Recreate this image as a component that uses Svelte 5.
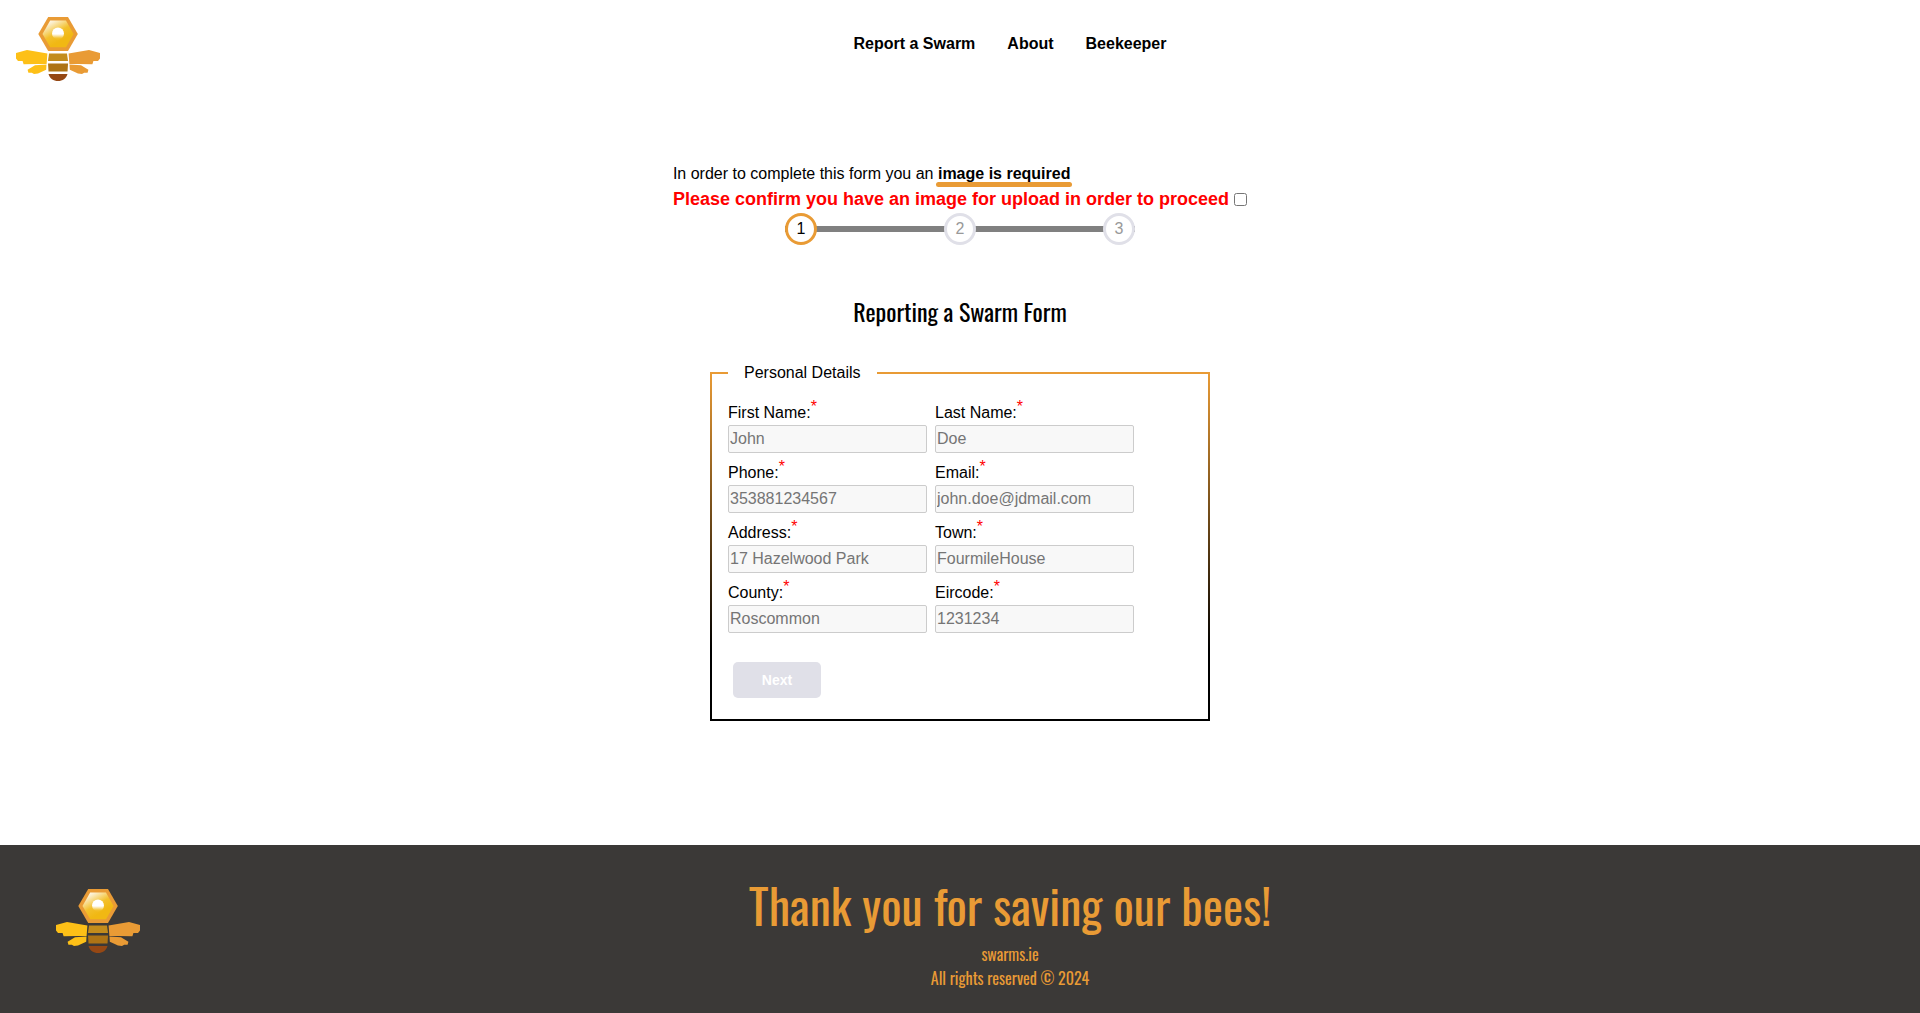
<script>
  const links = ['Report a Swarm', 'About', 'Beekeeper'];
  const fields = [
    { id: 'first-name', label: 'First Name:', hint: 'John', type: 'text' },
    { id: 'last-name', label: 'Last Name:', hint: 'Doe', type: 'text' },
    { id: 'phone', label: 'Phone:', hint: '353881234567', type: 'tel' },
    { id: 'email', label: 'Email:', hint: 'john.doe@jdmail.com', type: 'email' },
    { id: 'address', label: 'Address:', hint: '17 Hazelwood Park', type: 'text' },
    { id: 'town', label: 'Town:', hint: 'FourmileHouse', type: 'text' },
    { id: 'county', label: 'County:', hint: 'Roscommon', type: 'text' },
    { id: 'eircode', label: 'Eircode:', hint: '1231234', type: 'text' }
  ];
  let confirmed = $state(false);
</script>

{#snippet bee()}
  <svg class="bee" viewBox="0 0 84 65" role="img" aria-label="Swarms bee logo">
    <defs>
      <linearGradient id="comb" x1="0.1" y1="0" x2="0.6" y2="0.75">
        <stop offset="0" stop-color="#fff" />
        <stop offset="0.2" stop-color="#fbeecb" />
        <stop offset="0.65" stop-color="#f3c02c" />
        <stop offset="1" stop-color="#f1b813" />
      </linearGradient>
      <linearGradient id="dot" x1="0" y1="0" x2="0" y2="1">
        <stop offset="0.55" stop-color="#fff" />
        <stop offset="0.9" stop-color="#f3c02c" />
      </linearGradient>
    </defs>
    <path d="M32.200 1h19.800l9.800 17-9.800 17H32.200L22.300 18z" fill="#e99b35" />
    <path d="M34.200 4.600h15.800L57.600 18l-7.600 13.200H34.200L26.500 18z" fill="url(#comb)" />
    <circle cx="42" cy="17.400" r="6" fill="url(#dot)" />
    <path d="M0 37l11-3 20.400 3.600-.8 10.400L21 48l-13.400.2L6.600 45H2L0 42.500z" fill="#fdc017" />
    <path d="M84 37l-11-3-20.400 3.600.8 10.400L63 48l13.400.2 1-3.200H82l2-2.500z" fill="#e99b35" />
    <path d="M30.500 48.400l-11.500.8-7.400 4.600.8 3h3.400l2.200 1.200 4-.6 8.200-3.600z" fill="#fdc017" />
    <path d="M53.500 48.400l11.500.8 7.400 4.600-.8 3h-3.400L66 58l-4-.6-8.200-3.600z" fill="#e99b35" />
    <path d="M33 37.500h18l1 7.500H32z" fill="#c38c1c" />
    <path d="M32 47.500h20l-.5 8h-19z" fill="#ae7415" />
    <path d="M32.500 58h19c-1.200 4.600-5 7-9.500 7s-8.300-2.400-9.500-7z" fill="#954814" />
  </svg>
{/snippet}

<div class="page">
  <header>
    {@render bee()}
    <nav>
      {#each links as link}
        <a href="#top">{link}</a>
      {/each}
    </nav>
  </header>

  <main>
    <section class="notice">
      <p>In order to complete this form you an <strong>image is required</strong></p>
      <label class="confirm">
        Please confirm you have an image for upload in order to proceed
        <input type="checkbox" bind:checked={confirmed} />
      </label>
    </section>

    <ol class="steps">
      <li class="active">1</li>
      <li>2</li>
      <li>3</li>
    </ol>

    <h1>Reporting a Swarm Form</h1>

    <form>
      <fieldset>
        <legend>Personal Details</legend>
        <div class="grid">
          {#each fields as f}
            <div class="field">
              <label for={f.id}>{f.label}<span class="star">*</span></label>
              <input id={f.id} type={f.type} placeholder={f.hint} required />
            </div>
          {/each}
        </div>
        <button type="button" disabled={!confirmed}>Next</button>
      </fieldset>
    </form>
  </main>

  <footer>
    {@render bee()}
    <div class="thanks">
      <h2>Thank you for saving our bees!</h2>
      <p>swarms.ie</p>
      <p>All rights reserved © 2024</p>
    </div>
  </footer>
</div>

<style>
  :global(body) {
    margin: 0;
    background: #fff;
    color: #000;
    font: 16px/24px 'Liberation Sans', Arial, sans-serif;
  }
  .page {
    min-height: 100vh;
    display: flex;
    flex-direction: column;
  }
  p, h1, h2, ol {
    margin: 0;
    padding: 0;
    font-weight: 400;
  }
  h1, .thanks {
    font-family: Oswald, 'Liberation Sans Narrow', sans-serif;
  }
  .bee {
    width: 84px;
    height: 65px;
    flex: none;
  }
  header {
    display: flex;
    padding: 16px 0 0 16px;
  }
  nav {
    flex: 1;
    display: flex;
    justify-content: center;
    gap: 32px;
    padding-top: 16px;
  }
  nav a {
    color: #000;
    font-weight: 700;
    text-decoration: none;
  }
  main {
    flex: 1;
    display: flex;
    flex-direction: column;
    align-items: center;
    padding: 81px 0 124px;
  }
  strong {
    display: inline-block;
    position: relative;
  }
  strong::after {
    content: '';
    position: absolute;
    left: -2px;
    right: -2px;
    bottom: -1px;
    height: 5px;
    border-radius: 3px;
    background: #e99b35;
  }
  .confirm {
    display: flex;
    align-items: center;
    gap: 5px;
    color: #f00;
    font-size: 18px;
    line-height: 26px;
    font-weight: 700;
  }
  .confirm input {
    width: 13px;
    height: 13px;
    margin: 0;
  }
  .steps {
    width: 350px;
    margin-top: 1px;
    display: flex;
    justify-content: space-between;
    list-style: none;
    background: linear-gradient(#808080, #808080) center / 100% 6px no-repeat;
  }
  .steps li {
    box-sizing: border-box;
    width: 32px;
    height: 32px;
    border: 3px solid #e0e0e8;
    border-radius: 50%;
    background: #fff;
    color: #999;
    line-height: 26px;
    text-align: center;
  }
  .steps .active {
    border-color: #e99b35;
    color: #000;
  }
  h1 {
    margin-top: 48px;
    font-size: 24px;
    line-height: 36px;
  }
  form {
    margin-top: 32px;
  }
  fieldset {
    box-sizing: border-box;
    width: 500px;
    margin: 0;
    padding: 16px 16px 21px;
    border: 2px solid;
    border-image: linear-gradient(#e99b35, #000 80%) 1;
  }
  legend {
    padding: 0 16px;
  }
  .grid {
    display: grid;
    grid-template-columns: 199px 199px;
    gap: 8px;
  }
  .field {
    display: flex;
    flex-direction: column;
  }
  .star {
    color: #f00;
    font-size: 16px;
    line-height: 0;
    vertical-align: super;
  }
  .field input {
    box-sizing: border-box;
    width: 100%;
    height: 28px;
    padding: 1px;
    border: 1px solid #ccc;
    border-radius: 2px;
    background: #f8f8f8;
    font: inherit;
  }
  .field input::placeholder {
    color: #757575;
  }
  button {
    width: 88px;
    height: 36px;
    margin: 29px 0 0 5px;
    border: 0;
    border-radius: 5px;
    background: #e0e0e8;
    color: #fff;
    font: 700 14px 'Liberation Sans', Arial, sans-serif;
  }
  footer {
    display: flex;
    padding: 24px 40px 23px 56px;
    background: #3b3937;
    color: #e99b35;
  }
  footer .bee {
    margin-top: 19px;
  }
  .thanks {
    flex: 1;
    text-align: center;
  }
  h2 {
    font-size: 48px;
    line-height: 72px;
    margin-bottom: 1px;
  }
  .thanks p {
    font-size: 16px;
  }
</style>
